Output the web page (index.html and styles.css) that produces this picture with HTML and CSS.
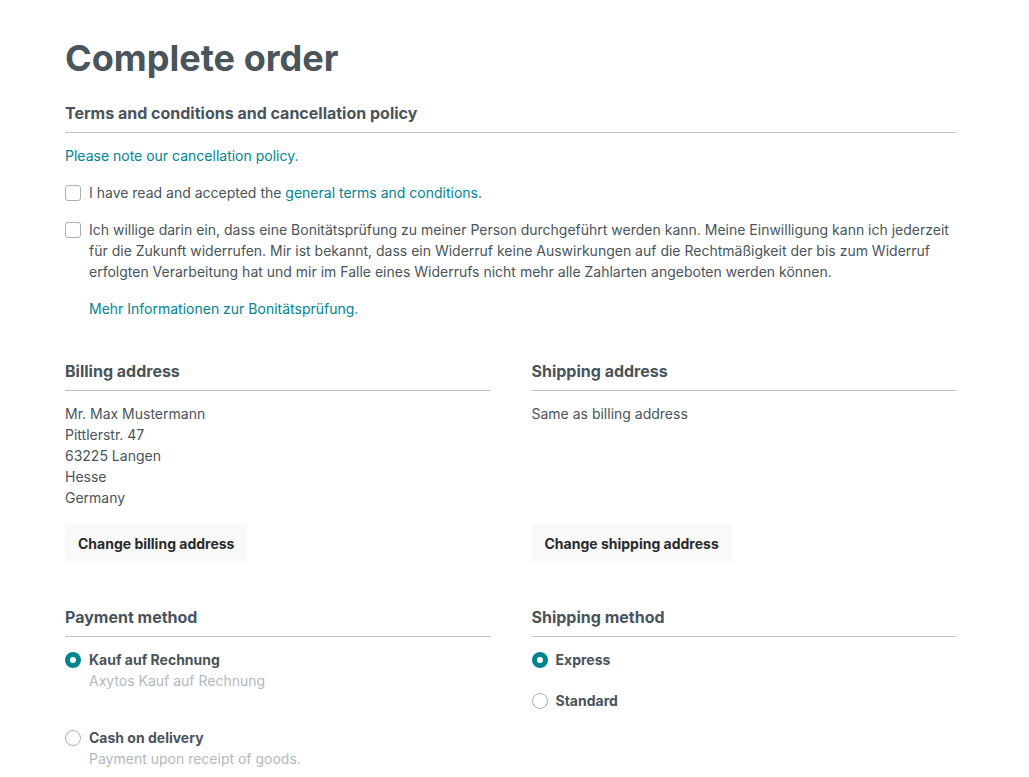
FILE: index.html
```html
<!DOCTYPE html>
<html lang="en">
<head>
<meta charset="utf-8">
<title>Complete order</title>
<link rel="stylesheet" href="styles.css">
</head>
<body>
<main class="page">
  <h1 class="page-title">Complete order</h1>

  <section class="card terms">
    <h2 class="card-title">Terms and conditions and cancellation policy</h2>
    <p class="note"><a href="#" class="link">Please note our cancellation policy.</a></p>
    <label class="check-row">
      <span class="checkbox"></span>
      <span class="check-text">I have read and accepted the <a href="#" class="link">general terms and conditions</a>.</span>
    </label>
    <label class="check-row">
      <span class="checkbox"></span>
      <span class="check-text">Ich willige darin ein, dass eine Bonitätsprüfung zu meiner Person durchgeführt werden kann. Meine Einwilligung kann ich jederzeit für die Zukunft widerrufen. Mir ist bekannt, dass ein Widerruf keine Auswirkungen auf die Rechtmäßigkeit der bis zum Widerruf erfolgten Verarbeitung hat und mir im Falle eines Widerrufs nicht mehr alle Zahlarten angeboten werden können.</span>
    </label>
    <p class="more"><a href="#" class="link">Mehr Informationen zur Bonitätsprüfung.</a></p>
  </section>

  <div class="grid addresses">
    <section class="card">
      <h2 class="card-title">Billing address</h2>
      <address class="address">
        Mr. Max Mustermann<br>
        Pittlerstr. 47<br>
        63225 Langen<br>
        Hesse<br>
        Germany
      </address>
      <button class="btn" type="button">Change billing address</button>
    </section>
    <section class="card shipping-card">
      <h2 class="card-title">Shipping address</h2>
      <p class="address">Same as billing address</p>
      <div><button class="btn" type="button">Change shipping address</button></div>
    </section>
  </div>

  <div class="grid methods">
    <section class="card">
      <h2 class="card-title">Payment method</h2>
      <div class="option payment-option">
        <span class="radio checked"></span>
        <div class="option-body">
          <div class="option-label">Kauf auf Rechnung</div>
          <div class="option-desc">Axytos Kauf auf Rechnung</div>
        </div>
      </div>
      <div class="option payment-option">
        <span class="radio"></span>
        <div class="option-body">
          <div class="option-label">Cash on delivery</div>
          <div class="option-desc">Payment upon receipt of goods.</div>
        </div>
      </div>
    </section>
    <section class="card">
      <h2 class="card-title">Shipping method</h2>
      <div class="option shipping-option">
        <span class="radio checked"></span>
        <div class="option-body">
          <div class="option-label">Express</div>
        </div>
      </div>
      <div class="option shipping-option">
        <span class="radio"></span>
        <div class="option-body">
          <div class="option-label">Standard</div>
        </div>
      </div>
    </section>
  </div>
</main>
</body>
</html>
```

FILE: styles.css
```css
* { box-sizing: border-box; }

html, body {
  margin: 0;
  padding: 0;
  background: #fff;
}

body {
  font-family: Inter, "Noto Sans", "Liberation Sans", sans-serif;
  font-size: 14px;
  line-height: 21px;
  color: #4a545b;
}

.page {
  width: 891px;
  margin-left: 65px;
  padding-top: 34px;
}

.page-title {
  margin: 0;
  font-size: 36.1px;
  line-height: 48px;
  font-weight: 700;
  color: #4a545b;
}

.card-title {
  margin: 0 0 12px;
  padding-bottom: 7px;
  border-bottom: 1px solid #bcc1c7;
  font-size: 16px;
  line-height: 24px;
  font-weight: 700;
  color: #4a545b;
}

.terms {
  margin-top: 19px;
}

.link {
  color: #008490;
  text-decoration: none;
}

.note {
  margin: 0 0 16px;
}

.check-row {
  display: flex;
  align-items: flex-start;
  gap: 8px;
  margin-bottom: 16px;
  cursor: pointer;
}

.checkbox {
  flex: 0 0 16px;
  width: 16px;
  height: 16px;
  margin-top: 2.5px;
  border: 1px solid #a9b0b6;
  border-radius: 3px;
  background: #fff;
}

.check-text {
  flex: 1;
}

.more {
  margin: 0 0 0 24px;
}

.grid {
  display: grid;
  grid-template-columns: 1fr 1fr;
  column-gap: 42px;
}

.addresses {
  margin-top: 40px;
}

.address {
  margin: 0 0 16px;
  font-style: normal;
}

.shipping-card {
  display: flex;
  flex-direction: column;
}

.shipping-card .address {
  flex: 1;
}

.btn {
  display: inline-block;
  padding: 9px 13px;
  border: 0;
  border-radius: 3px;
  background: #f9f9f9;
  font-family: inherit;
  font-size: 14px;
  line-height: 21px;
  font-weight: 700;
  color: #2b2b2b;
  cursor: pointer;
}

.methods {
  margin-top: 42px;
}

.option {
  display: flex;
  align-items: flex-start;
  gap: 8px;
}

.payment-option {
  margin-bottom: 36px;
}

.shipping-option {
  margin-bottom: 20px;
}

.radio {
  flex: 0 0 16px;
  width: 16px;
  height: 16px;
  margin-top: 2.5px;
  border: 1px solid #a9b0b6;
  border-radius: 50%;
  background: #fff;
}

.radio.checked {
  border: 5px solid #008490;
  background: #fff;
}

.option-label {
  font-weight: 700;
  color: #4a545b;
}

.option-desc {
  color: #b3b9be;
}
```
